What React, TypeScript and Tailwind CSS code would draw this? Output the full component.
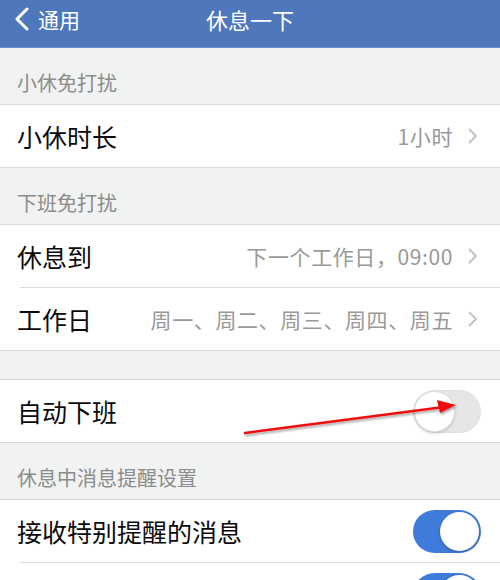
import React from "react";

const font = { fontFamily: '"Noto Sans CJK SC", "Noto Sans", sans-serif' };

function Chevron() {
  return (
    <svg width="10" height="16" viewBox="0 0 10 16" className="ml-[15px] shrink-0">
      <path d="M1.5 1.5 L8 8 L1.5 14.5" fill="none" stroke="#c4c4c8" strokeWidth="2" strokeLinecap="round" strokeLinejoin="round" />
    </svg>
  );
}

function SectionHeader({ title }: { title: string }) {
  return (
    <div className="h-[56px] flex items-end pl-[17px] pb-[7px] text-[20px] leading-[28px] text-[#8c8c8c]">
      {title}
    </div>
  );
}

function Row({ label, value, children, sep }: { label?: string; value?: string; children?: React.ReactNode; sep?: boolean }) {
  return (
    <div className="relative">
      <div className="h-[62px] flex items-center pl-[17px] pr-[22px]">
        {label && <span className="text-[25px] leading-[32px] text-[#0a0a0a] shrink-0">{label}</span>}
        <div className="flex-1" />
        {value !== undefined && (
          <>
            <span className="text-[21px] leading-[28px] tracking-[0.6px] text-[#999999] whitespace-nowrap">{value}</span>
            <Chevron />
          </>
        )}
        {children}
      </div>
      {sep && <div className="ml-[20px] h-px bg-[#dedede]" />}
    </div>
  );
}

function Toggle({ on }: { on: boolean }) {
  return on ? (
    <div className="w-[68px] h-[43px] rounded-full bg-[#3f7bda] flex items-center justify-end p-[2px] mr-[-3px]">
      <div className="w-[39px] h-[39px] rounded-full bg-white shadow-[0_1px_3px_rgba(0,0,0,0.25)]" />
    </div>
  ) : (
    <div className="w-[68px] h-[43px] rounded-full bg-[#e6e6e6] border border-[#e0e0e0] flex items-center mr-[-3px]">
      <div className="w-[41px] h-[41px] rounded-full bg-white border border-[#dcdcdc] shadow-[0_2px_3px_rgba(0,0,0,0.12)]" />
    </div>
  );
}

function Group({ children }: { children: React.ReactNode }) {
  return <div className="bg-white border-t border-b border-[#d9d9d9]">{children}</div>;
}

export default function App() {
  return (
    <div className="relative w-[500px] h-[580px] overflow-hidden bg-[#f1f2f2]" style={font}>
      <div className="h-[48px] bg-[#4e77bc] grid grid-cols-3 border-b border-[#6b8cc6]">
        <div className="flex items-center h-[38px] pl-[14px] text-white">
          <svg width="16" height="24" viewBox="0 0 16 24">
            <path d="M13 2 L3 12 L13 22" fill="none" stroke="white" strokeWidth="3" strokeLinecap="round" strokeLinejoin="round" />
          </svg>
          <span className="ml-[8px] text-[21px] leading-[28px]">通用</span>
        </div>
        <div className="flex items-center justify-center h-[38px] text-white text-[22px] leading-[28px]">休息一下</div>
        <div />
      </div>

      <SectionHeader title="小休免打扰" />
      <Group>
        <Row label="小休时长" value="1小时" />
      </Group>

      <SectionHeader title="下班免打扰" />
      <Group>
        <Row label="休息到" value="下一个工作日，09:00" sep />
        <Row label="工作日" value="周一、周二、周三、周四、周五" />
      </Group>

      <div className="h-[28px]" />
      <Group>
        <Row label="自动下班">
          <Toggle on={false} />
        </Row>
      </Group>

      <SectionHeader title="休息中消息提醒设置" />
      <Group>
        <Row label="接收特别提醒的消息" sep>
          <Toggle on />
        </Row>
        <Row>
          <Toggle on />
        </Row>
      </Group>

      <svg className="absolute left-0 top-0 pointer-events-none" width="500" height="580" viewBox="0 0 500 580">
        <defs>
          <filter id="sh" x="-10%" y="-50%" width="120%" height="200%">
            <feDropShadow dx="1" dy="2" stdDeviation="1.2" floodColor="#000" floodOpacity="0.35" />
          </filter>
        </defs>
        <g filter="url(#sh)">
          <line x1="245" y1="433" x2="440" y2="407.5" stroke="#f00f0f" strokeWidth="2.5" strokeLinecap="round" />
          <path d="M456 405 L437 400 L440 413 Z" fill="#f00f0f" />
        </g>
      </svg>
    </div>
  );
}
